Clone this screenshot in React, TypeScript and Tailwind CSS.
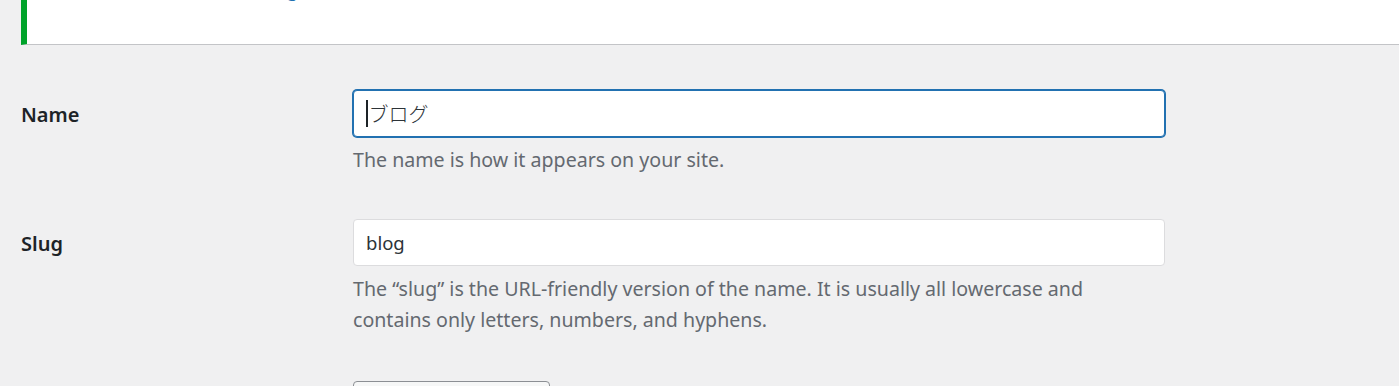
import React from "react";

export default function App() {
  return (
    <div className="h-[386px] overflow-hidden bg-[#f0f0f1] font-['Noto_Sans',sans-serif] text-[#1d2327]">
      <div className="relative ml-[21px] h-[45px] overflow-hidden border-b border-l-[6px] border-b-[#c3c4c7] border-l-[#00a32a] bg-white">
        <a className="absolute left-[142px] top-[-24px] text-[19px] leading-[26px] text-[#2271b1]">
          ← Go to Categories
        </a>
      </div>
      <div className="pl-[21px] pt-[45px]">
        <div className="grid grid-cols-[332px_812px]">
          <div className="flex h-[47px] items-center pt-[3px] text-[20px] font-semibold">Name</div>
          <div>
            <div className="flex h-[47px] w-[812px] items-center rounded-[4px] border border-[#2271b1] bg-white pl-[12px] text-[20px] text-[#2c3338] shadow-[0_0_0_1px_#2271b1]">
              <span className="mr-[1px] inline-block h-[27px] w-[1.5px] bg-[#1d2327]" />
              <span className="font-['Noto_Sans_CJK_JP',sans-serif] font-light">ブログ</span>
            </div>
            <p className="mt-[8px] text-[19.6px] leading-[30px] text-[#646970]">
              The name is how it appears on your site.
            </p>
          </div>
        </div>
        <div className="mt-[44px] grid grid-cols-[332px_812px]">
          <div className="flex h-[47px] items-center pt-[3px] text-[20px] font-semibold">Slug</div>
          <div>
            <div className="flex h-[47px] w-[812px] items-center rounded-[4px] border border-[#dcdcde] bg-white pl-[12px] text-[18.5px] text-[#2c3338]">
              blog
            </div>
            <p className="mt-[7px] w-[790px] text-[19.6px] leading-[31px] text-[#646970]">
              The “slug” is the URL-friendly version of the name. It is usually all lowercase and contains only letters, numbers, and hyphens.
            </p>
          </div>
        </div>
        <div className="mt-[46px] grid grid-cols-[332px_812px]">
          <div />
          <div className="h-[40px] w-[197px] rounded-[4px] border border-[#8c8f94] bg-[#f6f7f7]" />
        </div>
      </div>
    </div>
  );
}
